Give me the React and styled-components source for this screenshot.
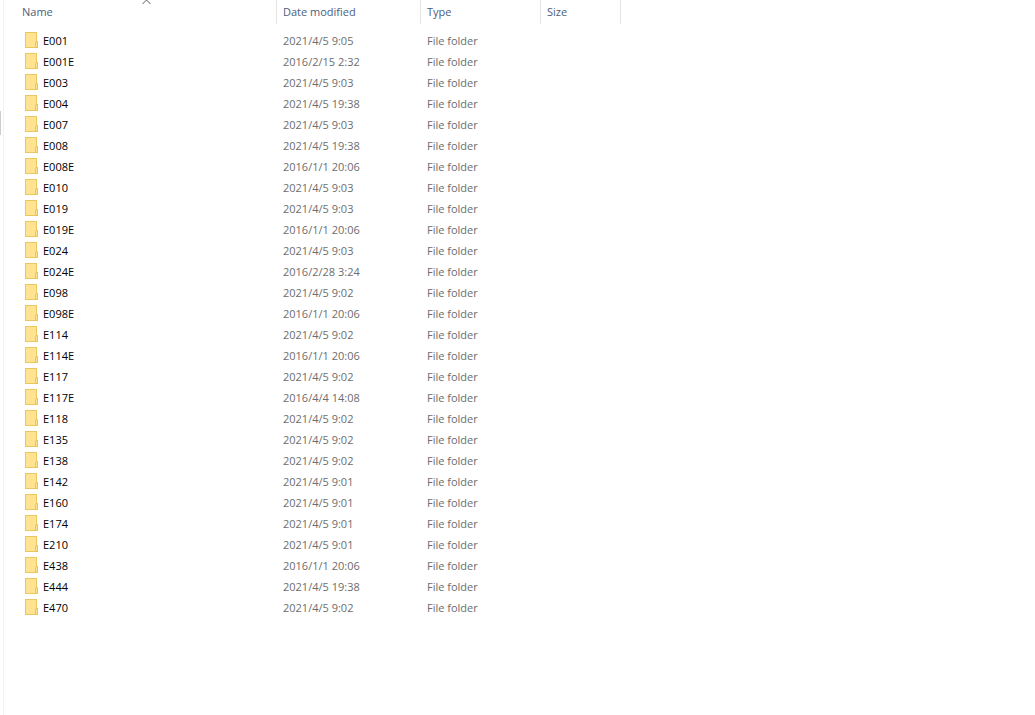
import React from "react";
import styled, { createGlobalStyle } from "styled-components";

const GlobalStyle = createGlobalStyle`
  * { box-sizing: border-box; }
  body {
    margin: 0;
    background: #fff;
    font-family: "Open Sans", "Noto Sans", sans-serif;
    font-size: 12px;
  }
`;

const Explorer = styled.div`
  display: flex;
  min-height: 100vh;
`;

const NavEdge = styled.aside`
  flex: none;
  width: 4px;
  padding-top: 111px;
  border-right: 1px solid #f3f3f3;
`;

const NavThumb = styled.div`
  width: 1px;
  height: 24px;
  background: #cdcdcd;
`;

const FilePane = styled.main`
  flex: 1;
  min-width: 0;
`;

const FileTable = styled.table`
  width: 100%;
  table-layout: fixed;
  border-collapse: separate;
  border-spacing: 0;
`;

const Column = styled.col`
  width: ${(p) => p.$width};
`;

const HeaderCell = styled.th`
  position: relative;
  height: 24px;
  padding: 0 0 0 ${(p) => (p.$first ? 18 : 6)}px;
  border-right: 1px solid #e5e5e5;
  text-align: left;
  font-weight: 400;
  line-height: 24px;
`;

const SortButton = styled.button`
  display: block;
  width: 100%;
  height: 24px;
  padding: 0;
  border: 0;
  background: none;
  color: #4c607a;
  font: inherit;
  font-size: 11px;
  line-height: 24px;
  text-align: left;
`;

const SortMark = styled.svg`
  position: absolute;
  top: 0;
  left: 50%;
  width: 9px;
  height: 4px;
  margin-left: 2px;
`;

const Body = styled.tbody`
  &::before {
    content: "";
    display: block;
    height: 6px;
  }
`;

const Cell = styled.td`
  height: 21px;
  padding: 0 0 0 6px;
  color: #6d6d6d;
  font-size: 11px;
  line-height: 21px;
  white-space: nowrap;
`;

const NameCell = styled(Cell)`
  padding-left: 21px;
  color: #000;
`;

const FileName = styled.span`
  display: flex;
  align-items: center;
  gap: 5px;
`;

const FolderIcon = () => (
  <svg width="13" height="17" viewBox="0 0 13 17" aria-hidden="true">
    <rect x="0" y="0" width="12" height="16" fill="#e9c85f" />
    <rect x="1" y="1" width="10" height="14" fill="#ffe391" />
    <path d="M10 16V10.5L11.2 9H13V16Z" fill="#e9c558" />
    <path d="M11 15V11L11.6 10H12V15Z" fill="#ffe58f" />
  </svg>
);

const folders = [
  ["E001", "2021/4/5 9:05"],
  ["E001E", "2016/2/15 2:32"],
  ["E003", "2021/4/5 9:03"],
  ["E004", "2021/4/5 19:38"],
  ["E007", "2021/4/5 9:03"],
  ["E008", "2021/4/5 19:38"],
  ["E008E", "2016/1/1 20:06"],
  ["E010", "2021/4/5 9:03"],
  ["E019", "2021/4/5 9:03"],
  ["E019E", "2016/1/1 20:06"],
  ["E024", "2021/4/5 9:03"],
  ["E024E", "2016/2/28 3:24"],
  ["E098", "2021/4/5 9:02"],
  ["E098E", "2016/1/1 20:06"],
  ["E114", "2021/4/5 9:02"],
  ["E114E", "2016/1/1 20:06"],
  ["E117", "2021/4/5 9:02"],
  ["E117E", "2016/4/4 14:08"],
  ["E118", "2021/4/5 9:02"],
  ["E135", "2021/4/5 9:02"],
  ["E138", "2021/4/5 9:02"],
  ["E142", "2021/4/5 9:01"],
  ["E160", "2021/4/5 9:01"],
  ["E174", "2021/4/5 9:01"],
  ["E210", "2021/4/5 9:01"],
  ["E438", "2016/1/1 20:06"],
  ["E444", "2021/4/5 19:38"],
  ["E470", "2021/4/5 9:02"],
];

export default function App() {
  return (
    <Explorer>
      <GlobalStyle />
      <NavEdge>
        <NavThumb />
      </NavEdge>
      <FilePane>
        <FileTable>
          <colgroup>
            <Column $width="273px" />
            <Column $width="144px" />
            <Column $width="120px" />
            <Column $width="80px" />
            <Column $width="auto" />
          </colgroup>
          <thead>
            <tr>
              <HeaderCell $first scope="col" aria-sort="ascending">
                <SortButton type="button">Name</SortButton>
                <SortMark viewBox="0 0 9 4" aria-hidden="true">
                  <path d="M0.5 4L4.5 0L8.5 4" fill="none" stroke="#5a5a5a" />
                </SortMark>
              </HeaderCell>
              <HeaderCell scope="col">
                <SortButton type="button">Date modified</SortButton>
              </HeaderCell>
              <HeaderCell scope="col">
                <SortButton type="button">Type</SortButton>
              </HeaderCell>
              <HeaderCell scope="col">
                <SortButton type="button">Size</SortButton>
              </HeaderCell>
              <td />
            </tr>
          </thead>
          <Body>
            {folders.map(([name, modified]) => (
              <tr key={name}>
                <NameCell>
                  <FileName>
                    <FolderIcon />
                    {name}
                  </FileName>
                </NameCell>
                <Cell>{modified}</Cell>
                <Cell>File folder</Cell>
                <Cell />
                <td />
              </tr>
            ))}
          </Body>
        </FileTable>
      </FilePane>
    </Explorer>
  );
}
